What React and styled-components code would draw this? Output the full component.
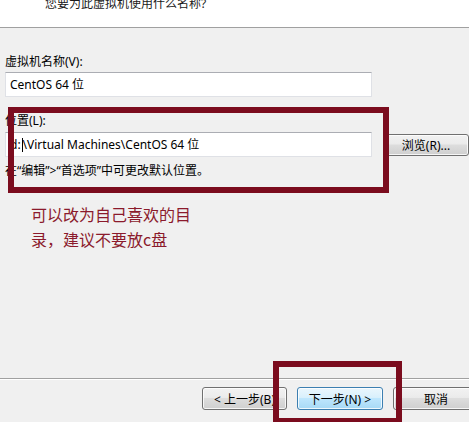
import React from "react";
import styled, { createGlobalStyle } from "styled-components";

const GlobalStyle = createGlobalStyle`
  html, body {
    margin: 0;
    padding: 0;
    background: #f0f0f0;
  }
  body {
    font-family: "Noto Sans", "Noto Sans CJK SC", sans-serif;
    font-size: 12px;
    color: #000;
  }
`;

const Dialog = styled.div`
  position: relative;
  width: 469px;
  height: 422px;
  overflow: hidden;
  display: flex;
  flex-direction: column;
  background: #f0f0f0;
`;

const Header = styled.div`
  height: 27px;
  background: #ffffff;
  border-bottom: 1px solid #a0a0a0;
  padding-left: 45px;
  overflow: hidden;
`;

const Title = styled.div`
  margin-top: -4px;
  line-height: 16px;
  color: #1a1a1a;
`;

const Body = styled.div`
  flex: 1;
  display: flex;
  flex-direction: column;
  padding: 0 5px;
`;

const Label = styled.div`
  line-height: 16px;
  margin-top: ${(p) => p.$gap}px;
  white-space: nowrap;
`;

const TextBox = styled.div`
  box-sizing: border-box;
  flex: none;
  width: 367px;
  height: 25px;
  margin-top: ${(p) => p.$gap}px;
  padding: 0 4px;
  display: flex;
  align-items: center;
  background: #ffffff;
  border: 1px solid #dfe1e6;
  border-top-color: #abadb3;
  white-space: nowrap;
  line-height: 16px;
`;

const Caret = styled.span`
  display: inline-block;
  width: 1px;
  height: 14px;
  background: #000;
  margin: 0 0 0 1px;
`;

const PathRow = styled.div`
  display: flex;
  align-items: center;
  gap: 11px;
  margin-top: 3px;

  ${TextBox} {
    margin-top: 0;
  }
`;

const Button = styled.button`
  box-sizing: border-box;
  flex: none;
  width: ${(p) => p.$w}px;
  height: ${(p) => p.$h || 23}px;
  padding: 0;
  font-family: inherit;
  font-size: 12px;
  color: #000;
  white-space: nowrap;
  border-radius: 3px;
  border: 1px solid ${(p) => (p.$primary ? "#3c7fb1" : "#707070")};
  background: ${(p) =>
    p.$primary
      ? "linear-gradient(#eaf6fd 0%, #d9f0fc 45%, #bee6fd 50%, #a7d9f5 100%)"
      : "linear-gradient(#f2f2f2 0%, #ebebeb 45%, #dddddd 50%, #cfcfcf 100%)"};
  box-shadow: inset 0 0 0 1px rgba(255, 255, 255, 0.8);
`;

const Hint = styled.div`
  line-height: 16px;
  margin-top: 6px;
  white-space: nowrap;
`;

const Note = styled.div`
  margin-top: 23px;
  padding-left: 26px;
  width: 170px;
  font-family: "Noto Sans CJK SC", sans-serif;
  font-size: 16px;
  line-height: 25px;
  color: #8b1a2c;
`;

const Footer = styled.div`
  height: 35px;
  border-top: 1px solid #a0a0a0;
  box-shadow: inset 0 1px 0 #ffffff;
  display: flex;
  align-items: flex-start;
  gap: 10px;
  padding: 8px 0 0 202px;
`;

const RedFrame = styled.div`
  position: absolute;
  top: ${(p) => p.$top}px;
  left: ${(p) => p.$left}px;
  width: ${(p) => p.$width}px;
  height: ${(p) => p.$height}px;
  box-sizing: border-box;
  border: 6px solid #7b0c1e;
  pointer-events: none;
`;

export default function App() {
  return (
    <>
      <GlobalStyle />
      <Dialog>
        <Header>
          <Title>您要为此虚拟机使用什么名称?</Title>
        </Header>
        <Body>
          <Label $gap={26}>虚拟机名称(V):</Label>
          <TextBox $gap={2}>CentOS 64 位</TextBox>
          <Label $gap={16}>位置(L):</Label>
          <PathRow>
            <TextBox>
              d:<Caret />\Virtual Machines\CentOS 64 位
            </TextBox>
            <Button $w={86} $h={22}>浏览(R)...</Button>
          </PathRow>
          <Hint>在“编辑”&gt;“首选项”中可更改默认位置。</Hint>
          <Note>可以改为自己喜欢的目录，建议不要放c盘</Note>
        </Body>
        <Footer>
          <Button $w={85}>&lt; 上一步(B)</Button>
          <Button $w={86} $primary>下一步(N) &gt;</Button>
          <Button $w={86}>取消</Button>
        </Footer>
        <RedFrame $top={107} $left={8} $width={381} $height={86} />
        <RedFrame $top={361} $left={273} $width={129} $height={63} />
      </Dialog>
    </>
  );
}
